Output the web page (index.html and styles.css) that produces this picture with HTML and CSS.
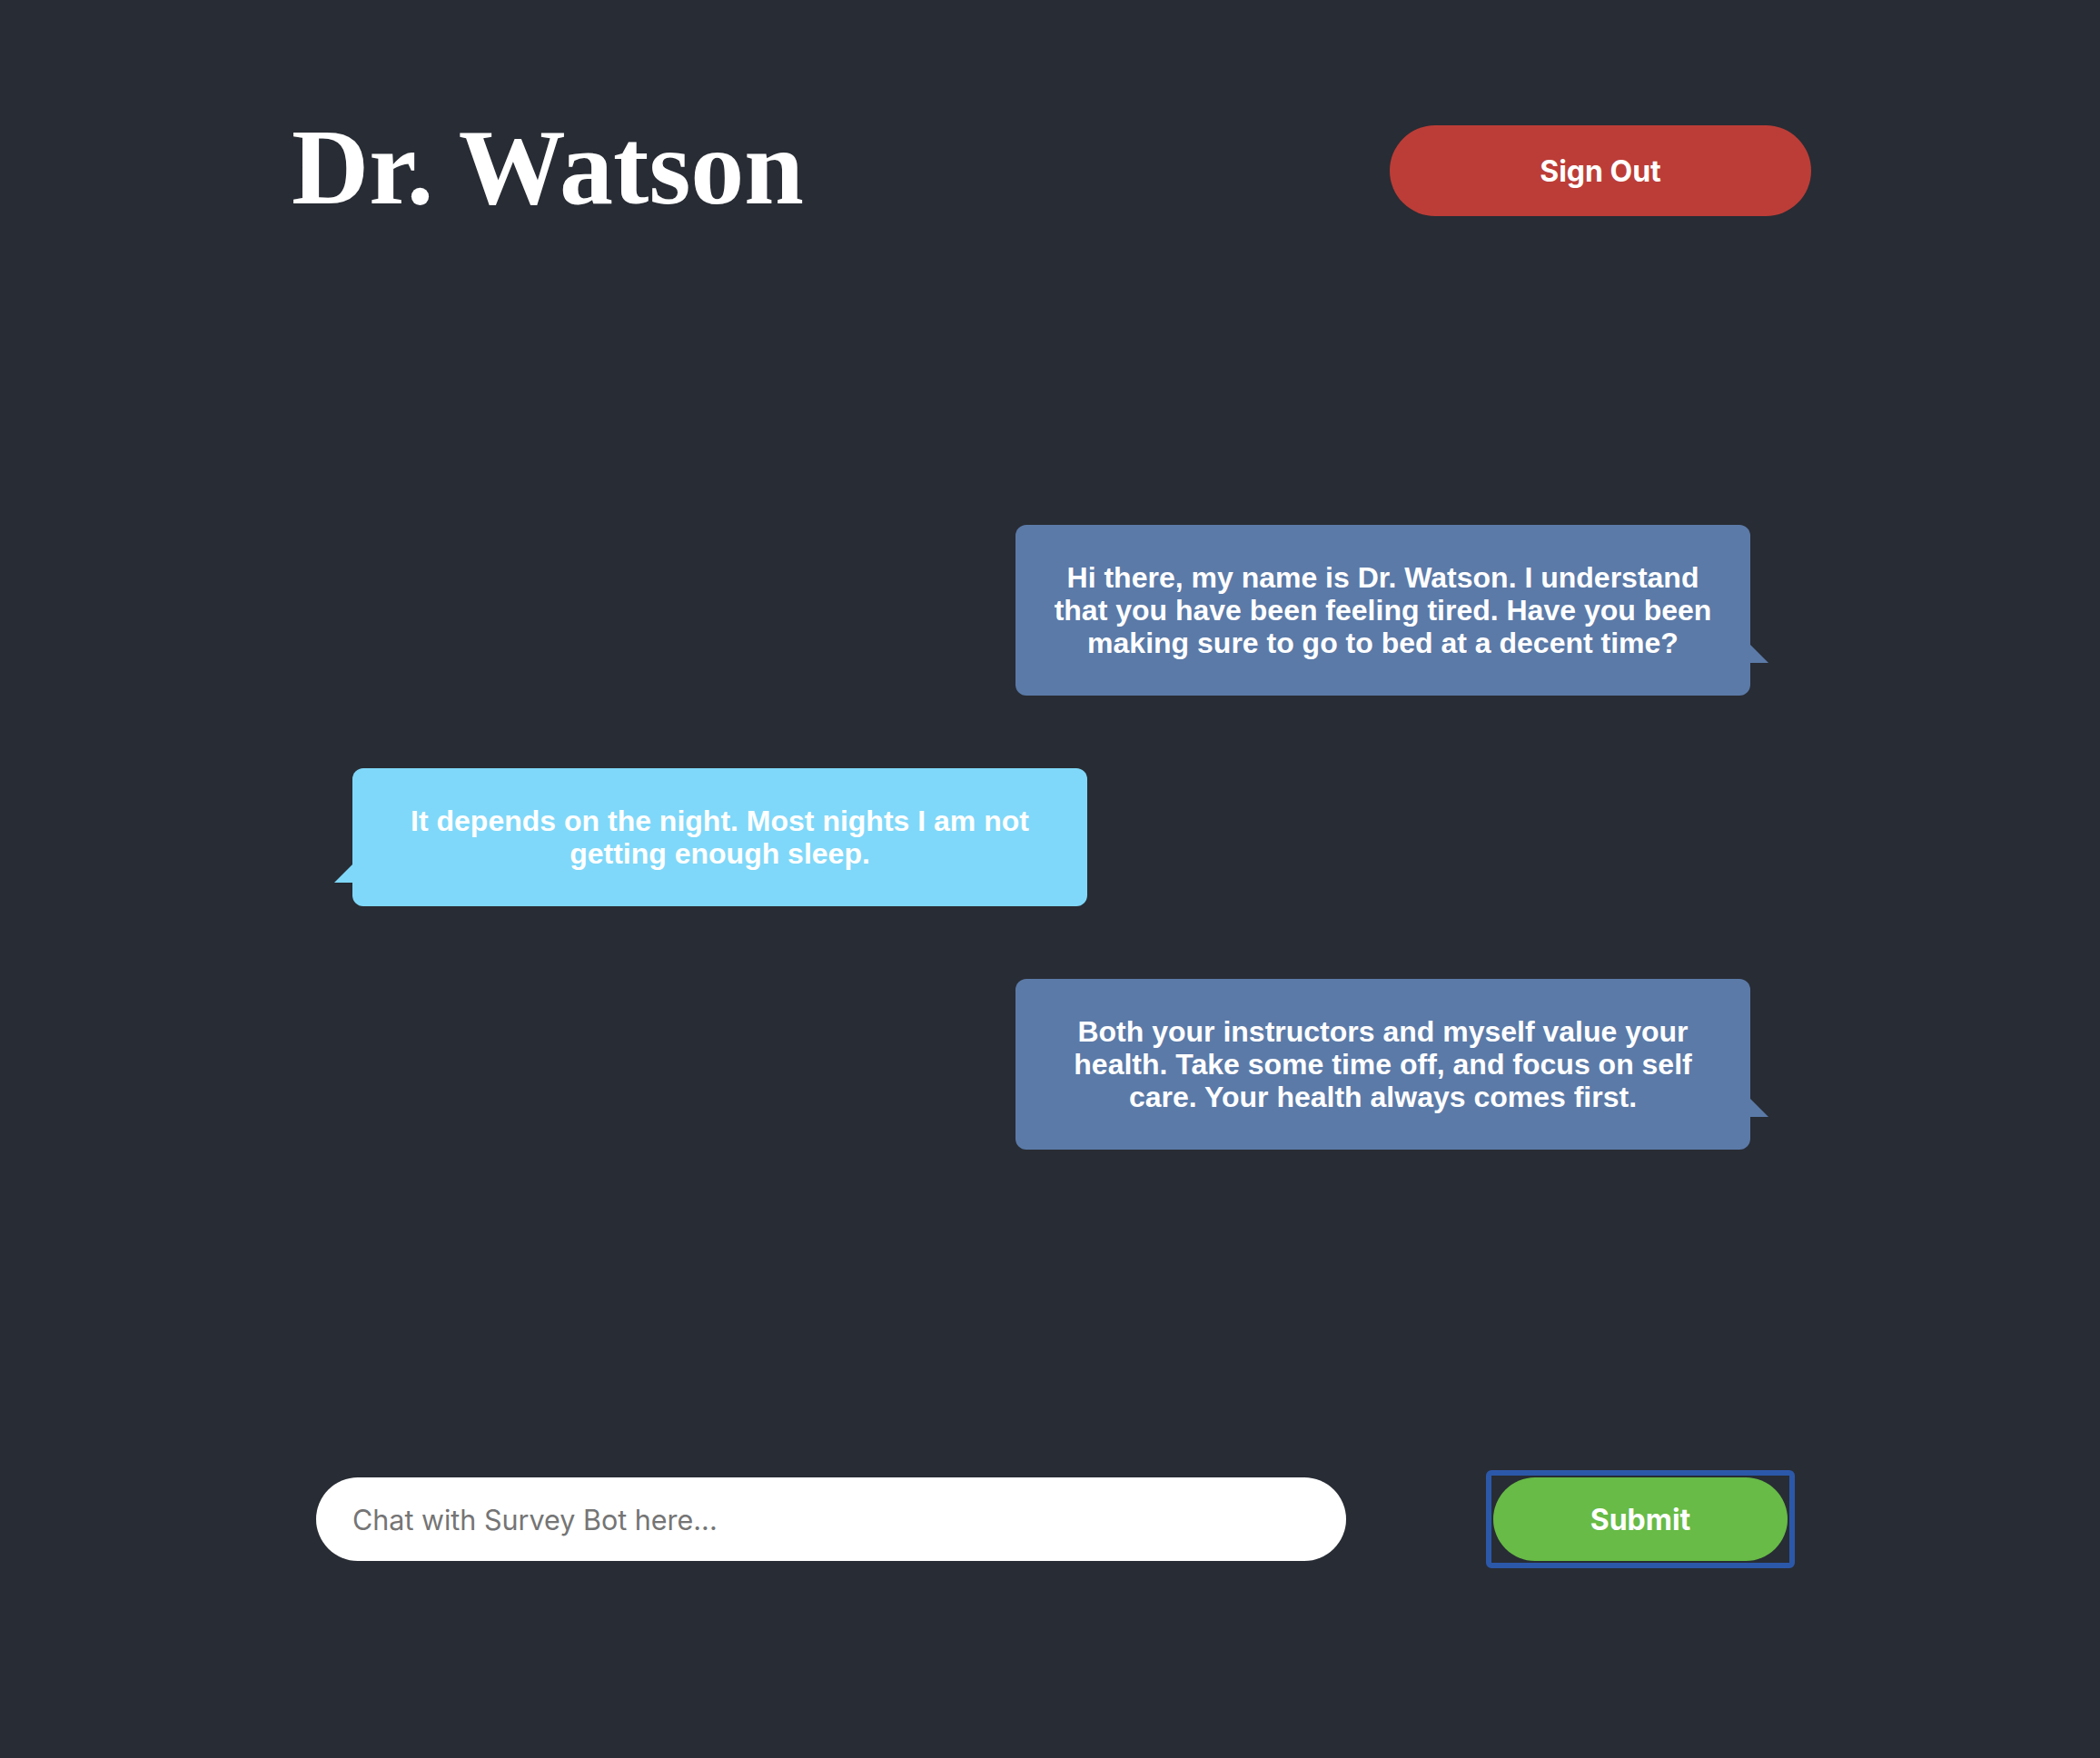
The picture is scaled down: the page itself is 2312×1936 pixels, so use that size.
FILE: index.html
```html
<!DOCTYPE html>
<html lang="en">
<head>
<meta charset="utf-8">
<title>Dr. Watson</title>
<link rel="stylesheet" href="styles.css">
</head>
<body>
<div class="app">
  <header class="header">
    <h1 class="title">Dr. Watson</h1>
    <button class="signout" type="button">Sign Out</button>
  </header>

  <main class="chat">
    <div class="bubble bot">Hi there, my name is Dr. Watson. I understand that you have been feeling tired. Have you been making sure to go to bed at a decent time?</div>
    <div class="bubble user">It depends on the night. Most nights I am not getting enough sleep.</div>
    <div class="bubble bot">Both your instructors and myself value your health. Take some time off, and focus on self care. Your health always comes first.</div>
  </main>

  <form class="composer">
    <input class="chat-input" type="text" placeholder="Chat with Survey Bot here...">
    <span class="submit-ring"><button class="submit" type="button">Submit</button></span>
  </form>
</div>
</body>
</html>
```

FILE: styles.css
```css
html, body {
  margin: 0;
  padding: 0;
}

body {
  background: #282c34;
  min-height: 1936px;
  font-family: "Liberation Sans", Arial, sans-serif;
}

.app {
  width: 1676px;
  margin: 0 auto;
  padding-top: 126px;
}

.header {
  display: flex;
  justify-content: space-between;
  align-items: flex-start;
}

.title {
  margin: 0 0 0 3px;
  font-family: "Liberation Serif", "Times New Roman", serif;
  font-weight: 700;
  font-size: 118px;
  line-height: 118px;
  letter-spacing: 0;
  color: #ffffff;
}

.signout {
  margin-top: 12px;
  width: 464px;
  height: 100px;
  border: none;
  border-radius: 50px;
  background: #bc3d37;
  color: #ffffff;
  font-family: Inter, "Noto Sans", sans-serif;
  font-weight: 700;
  font-size: 32px;
  cursor: pointer;
}

.chat {
  display: flex;
  flex-direction: column;
  gap: 80px;
  margin-top: 334px;
  padding: 0 67px 0 70px;
}

.bubble {
  position: relative;
  width: 809px;
  box-sizing: border-box;
  padding: 40px 40px;
  border-radius: 12px;
  color: #ffffff;
  font-family: "Liberation Sans", Arial, sans-serif;
  font-weight: 700;
  font-size: 32px;
  line-height: 36px;
  text-align: center;
}

.bubble::after {
  content: "";
  position: absolute;
  top: 70%;
  width: 0;
  height: 0;
  border-top: 20px solid transparent;
}

.bubble.bot {
  align-self: flex-end;
  background: #5b7aa8;
}

.bubble.bot::after {
  left: 100%;
  border-left: 20px solid #5b7aa8;
}

.bubble.user {
  align-self: flex-start;
  background: #7fd8f9;
}

.bubble.user::after {
  right: 100%;
  border-right: 20px solid #7fd8f9;
}

.composer {
  display: flex;
  justify-content: space-between;
  align-items: center;
  margin: 353px 18px 0 30px;
}

.chat-input {
  width: 1134px;
  height: 92px;
  box-sizing: border-box;
  border: none;
  border-radius: 46px;
  padding: 0 40px;
  background: #ffffff;
  font-family: Inter, "Noto Sans", sans-serif;
  font-size: 30.5px;
  color: #222222;
  outline: none;
}

.chat-input::placeholder {
  color: #757575;
}

.submit-ring {
  display: block;
  padding: 2px;
  border: 6px solid #2c58a9;
  border-radius: 6px;
}

.submit {
  display: block;
  width: 324px;
  height: 92px;
  border: none;
  border-radius: 46px;
  background: #67bb46;
  color: #ffffff;
  font-family: Inter, "Noto Sans", sans-serif;
  font-weight: 700;
  font-size: 32px;
  cursor: pointer;
}
```
